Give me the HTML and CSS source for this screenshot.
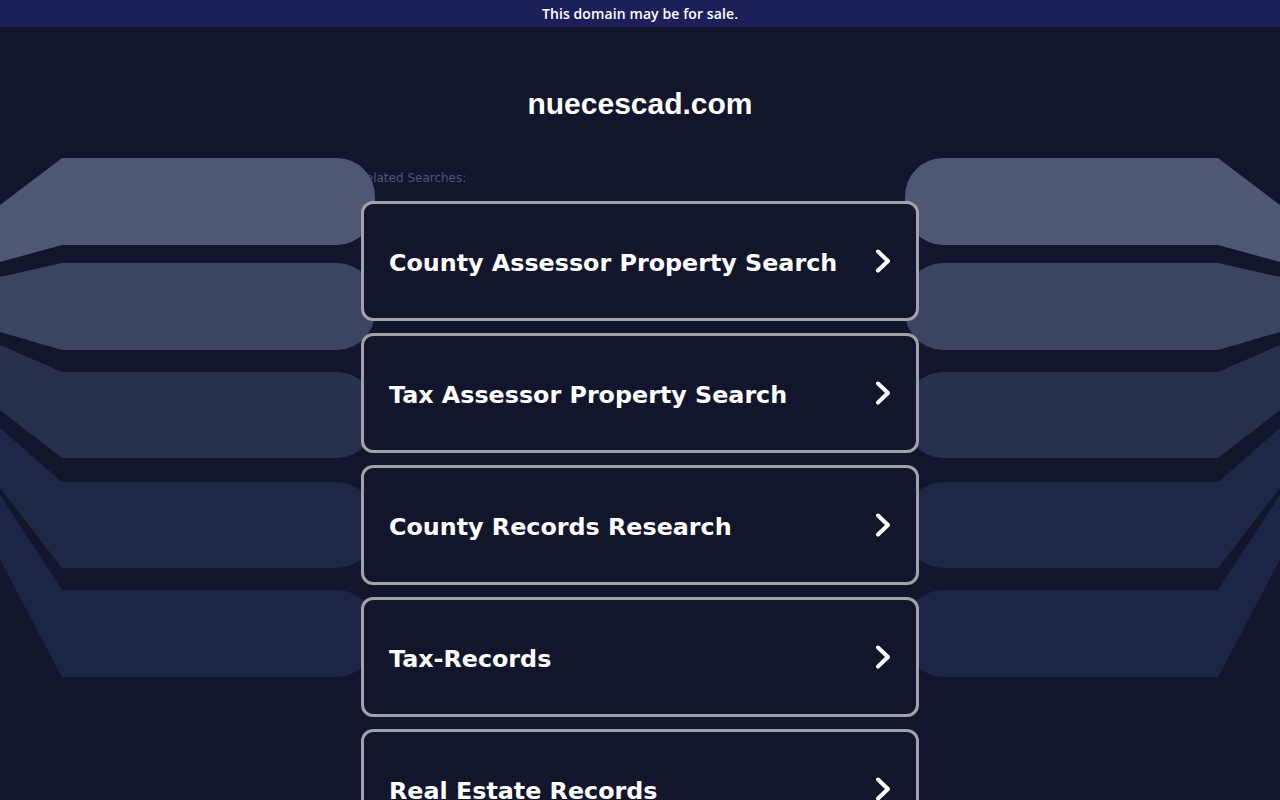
FILE: index.html
```html
<!DOCTYPE html>
<html lang="en">
<head>
<meta charset="utf-8">
<title>nuecescad.com</title>
<link rel="stylesheet" href="styles.css">
</head>
<body>
<div class="topbar">This domain may be for sale.</div>
<svg class="bands" width="1280" height="800" viewBox="0 0 1280 800" aria-hidden="true">
  <g id="left">
    <path class="b1" d="M0,205 L62,158 H337 A38,38 0 0 1 375,196 V207 A38,38 0 0 1 337,245 H62 L0,262 Z"/>
    <path class="b2" d="M0,277 L62,263 H337 A38,38 0 0 1 375,301 V312 A38,38 0 0 1 337,350 H62 L0,332 Z"/>
    <path class="b3" d="M0,345 L62,372 H337 A38,38 0 0 1 375,410 V420 A38,38 0 0 1 337,458 H62 L0,410 Z"/>
    <path class="b4" d="M0,428 L62,482 H337 A38,38 0 0 1 375,520 V530 A38,38 0 0 1 337,568 H62 L0,488 Z"/>
    <path class="b5" d="M0,495 L62,590 H337 A38,38 0 0 1 375,628 V639 A38,38 0 0 1 337,677 H62 L0,560 Z"/>
  </g>
  <g transform="translate(1280,0) scale(-1,1)">
    <path class="b1" d="M0,205 L62,158 H337 A38,38 0 0 1 375,196 V207 A38,38 0 0 1 337,245 H62 L0,262 Z"/>
    <path class="b2" d="M0,277 L62,263 H337 A38,38 0 0 1 375,301 V312 A38,38 0 0 1 337,350 H62 L0,332 Z"/>
    <path class="b3" d="M0,345 L62,372 H337 A38,38 0 0 1 375,410 V420 A38,38 0 0 1 337,458 H62 L0,410 Z"/>
    <path class="b4" d="M0,428 L62,482 H337 A38,38 0 0 1 375,520 V530 A38,38 0 0 1 337,568 H62 L0,488 Z"/>
    <path class="b5" d="M0,495 L62,590 H337 A38,38 0 0 1 375,628 V639 A38,38 0 0 1 337,677 H62 L0,560 Z"/>
  </g>
</svg>
<main class="content">
  <h1 class="title">nuecescad.com</h1>
  <section class="related">
    <div class="label">Related Searches:</div>
    <ul class="cards">
      <li class="card"><span class="card-text">County Assessor Property Search</span><svg class="chev" width="18" height="26" viewBox="0 0 18 26"><path d="M4 3.5 L14 13 L4 22.5"/></svg></li>
      <li class="card"><span class="card-text">Tax Assessor Property Search</span><svg class="chev" width="18" height="26" viewBox="0 0 18 26"><path d="M4 3.5 L14 13 L4 22.5"/></svg></li>
      <li class="card"><span class="card-text">County Records Research</span><svg class="chev" width="18" height="26" viewBox="0 0 18 26"><path d="M4 3.5 L14 13 L4 22.5"/></svg></li>
      <li class="card"><span class="card-text">Tax-Records</span><svg class="chev" width="18" height="26" viewBox="0 0 18 26"><path d="M4 3.5 L14 13 L4 22.5"/></svg></li>
      <li class="card"><span class="card-text">Real Estate Records</span><svg class="chev" width="18" height="26" viewBox="0 0 18 26"><path d="M4 3.5 L14 13 L4 22.5"/></svg></li>
    </ul>
  </section>
</main>
</body>
</html>
```

FILE: styles.css
```css
html, body {
  margin: 0;
  padding: 0;
}

body {
  background: #11162d;
  color: #fff;
  font-family: "DejaVu Sans", Verdana, sans-serif;
  min-height: 800px;
  position: relative;
}

.topbar {
  height: 27px;
  box-sizing: border-box;
  padding-bottom: 1px;
  background: #1c1f5a;
  color: #fff;
  display: flex;
  align-items: center;
  justify-content: center;
  font-family: "Open Sans", "Noto Sans", sans-serif;
  font-weight: 600;
  font-size: 14px;
  letter-spacing: 0.1px;
}

.bands {
  position: absolute;
  top: 0;
  left: 0;
  z-index: 0;
}

.b1 { fill: #4f5773; }
.b2 { fill: #3c4461; }
.b3 { fill: #29304e; }
.b4 { fill: #1f2747; }
.b5 { fill: #1c2546; }

.content {
  display: flex;
  flex-direction: column;
  align-items: center;
}

.title {
  margin: 59px 0 0;
  font-family: "Liberation Sans", Arial, sans-serif;
  font-weight: 700;
  font-size: 30px;
  line-height: 36px;
  color: #fff;
  position: relative;
  z-index: 1;
}

.related {
  width: 564px;
  margin-top: 49px;
}

.label {
  font-family: "DejaVu Sans", Verdana, sans-serif;
  font-size: 12px;
  line-height: 14px;
  color: #4e5578;
  margin-bottom: 16px;
}

.cards {
  list-style: none;
  margin: 0;
  padding: 0 3px;
  display: flex;
  flex-direction: column;
  gap: 12px;
}

.card {
  position: relative;
  z-index: 1;
  box-sizing: border-box;
  height: 120px;
  border: 3px solid #a2a2a7;
  border-radius: 12px;
  background: #11162d;
  display: flex;
  align-items: center;
  justify-content: space-between;
  padding: 2px 24px 0 25px;
}

.card-text {
  font-family: "DejaVu Sans", Verdana, sans-serif;
  font-weight: 700;
  font-size: 23.8px;
  color: #fff;
  padding-top: 2px;
}

.chev {
  margin-top: -2px;
}

.chev path {
  fill: none;
  stroke: #fff;
  stroke-width: 4;
  stroke-linecap: round;
  stroke-linejoin: round;
}
```
